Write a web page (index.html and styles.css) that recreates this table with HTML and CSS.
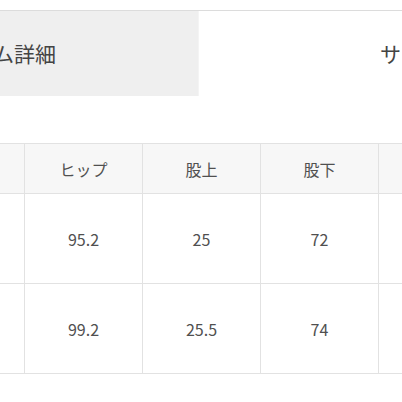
FILE: index.html
```html
<!DOCTYPE html>
<html lang="ja">
<head>
<meta charset="utf-8">
<link rel="stylesheet" href="styles.css">
</head>
<body>
<div class="page">
  <div class="tabs">
    <div class="tab tab-active"><span>アイテム詳細</span></div>
    <div class="tab tab-size"><span>サイズ</span></div>
  </div>
  <table class="sizes">
    <thead>
      <tr>
        <th>ウエスト</th>
        <th>ヒップ</th>
        <th>股上</th>
        <th>股下</th>
        <th>わたり</th>
      </tr>
    </thead>
    <tbody>
      <tr>
        <td>66</td>
        <td>95.2</td>
        <td>25</td>
        <td>72</td>
        <td>31</td>
      </tr>
      <tr>
        <td>70</td>
        <td>99.2</td>
        <td>25.5</td>
        <td>74</td>
        <td>32</td>
      </tr>
    </tbody>
  </table>
</div>
</body>
</html>
```

FILE: styles.css
```css
html, body {
  margin: 0;
  padding: 0;
  background: #ffffff;
  overflow: hidden;
}

.page {
  width: 402px;
  height: 402px;
  overflow: hidden;
  font-family: "Noto Sans CJK JP", "Noto Sans", sans-serif;
  color: #444444;
}

.tabs {
  display: flex;
  margin-top: 10px;
  margin-left: -203px;
  width: 805px;
  border-top: 1px solid #dcdcdc;
}

.tab {
  height: 85px;
  display: flex;
  align-items: center;
  font-size: 21px;
  line-height: 1;
  color: #444444;
}

.tab-active {
  width: 402px;
  background: #efefef;
  justify-content: flex-end;
  padding-right: 142px;
  box-sizing: border-box;
  border-right: 1px solid #f4f4f4;
}

.tab-size {
  width: 402px;
  padding-left: 181px;
  box-sizing: border-box;
}

.sizes {
  margin-top: 47px;
  margin-left: -94px;
  border-collapse: collapse;
  table-layout: fixed;
  width: 586px;
  color: #505050;
}

.sizes th,
.sizes td {
  width: 117px;
  border: 1px solid #e2e2e2;
  text-align: center;
  padding: 0;
}

.sizes th {
  height: 49px;
  background: #f7f7f7;
  font-weight: normal;
  font-size: 16px;
}

.sizes td {
  height: 89px;
  font-size: 16px;
}
```
